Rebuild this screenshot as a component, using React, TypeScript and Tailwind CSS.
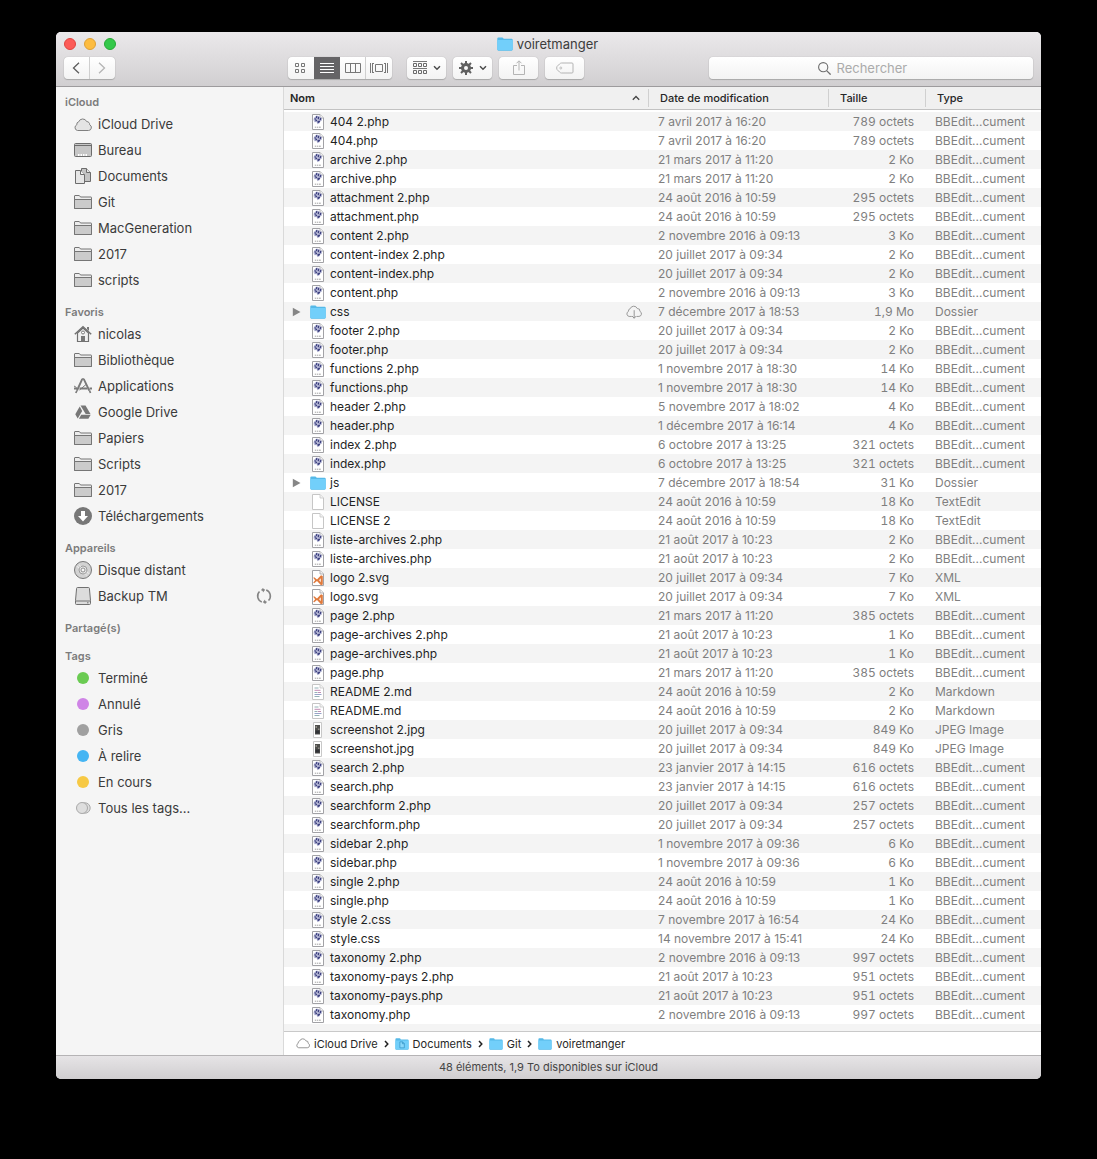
import { ReactElement, ReactNode } from "react";

type Kind = "php" | "folder" | "blank" | "svg" | "md" | "jpg";
type FileRow = [name: string, kind: Kind, date: string, size: string, type: string];

const BB = "BBEdit...cument";

const files: FileRow[] = [
  ["404 2.php", "php", "7 avril 2017 à 16:20", "789 octets", BB],
  ["404.php", "php", "7 avril 2017 à 16:20", "789 octets", BB],
  ["archive 2.php", "php", "21 mars 2017 à 11:20", "2 Ko", BB],
  ["archive.php", "php", "21 mars 2017 à 11:20", "2 Ko", BB],
  ["attachment 2.php", "php", "24 août 2016 à 10:59", "295 octets", BB],
  ["attachment.php", "php", "24 août 2016 à 10:59", "295 octets", BB],
  ["content 2.php", "php", "2 novembre 2016 à 09:13", "3 Ko", BB],
  ["content-index 2.php", "php", "20 juillet 2017 à 09:34", "2 Ko", BB],
  ["content-index.php", "php", "20 juillet 2017 à 09:34", "2 Ko", BB],
  ["content.php", "php", "2 novembre 2016 à 09:13", "3 Ko", BB],
  ["css", "folder", "7 décembre 2017 à 18:53", "1,9 Mo", "Dossier"],
  ["footer 2.php", "php", "20 juillet 2017 à 09:34", "2 Ko", BB],
  ["footer.php", "php", "20 juillet 2017 à 09:34", "2 Ko", BB],
  ["functions 2.php", "php", "1 novembre 2017 à 18:30", "14 Ko", BB],
  ["functions.php", "php", "1 novembre 2017 à 18:30", "14 Ko", BB],
  ["header 2.php", "php", "5 novembre 2017 à 18:02", "4 Ko", BB],
  ["header.php", "php", "1 décembre 2017 à 16:14", "4 Ko", BB],
  ["index 2.php", "php", "6 octobre 2017 à 13:25", "321 octets", BB],
  ["index.php", "php", "6 octobre 2017 à 13:25", "321 octets", BB],
  ["js", "folder", "7 décembre 2017 à 18:54", "31 Ko", "Dossier"],
  ["LICENSE", "blank", "24 août 2016 à 10:59", "18 Ko", "TextEdit"],
  ["LICENSE 2", "blank", "24 août 2016 à 10:59", "18 Ko", "TextEdit"],
  ["liste-archives 2.php", "php", "21 août 2017 à 10:23", "2 Ko", BB],
  ["liste-archives.php", "php", "21 août 2017 à 10:23", "2 Ko", BB],
  ["logo 2.svg", "svg", "20 juillet 2017 à 09:34", "7 Ko", "XML"],
  ["logo.svg", "svg", "20 juillet 2017 à 09:34", "7 Ko", "XML"],
  ["page 2.php", "php", "21 mars 2017 à 11:20", "385 octets", BB],
  ["page-archives 2.php", "php", "21 août 2017 à 10:23", "1 Ko", BB],
  ["page-archives.php", "php", "21 août 2017 à 10:23", "1 Ko", BB],
  ["page.php", "php", "21 mars 2017 à 11:20", "385 octets", BB],
  ["README 2.md", "md", "24 août 2016 à 10:59", "2 Ko", "Markdown"],
  ["README.md", "md", "24 août 2016 à 10:59", "2 Ko", "Markdown"],
  ["screenshot 2.jpg", "jpg", "20 juillet 2017 à 09:34", "849 Ko", "JPEG Image"],
  ["screenshot.jpg", "jpg", "20 juillet 2017 à 09:34", "849 Ko", "JPEG Image"],
  ["search 2.php", "php", "23 janvier 2017 à 14:15", "616 octets", BB],
  ["search.php", "php", "23 janvier 2017 à 14:15", "616 octets", BB],
  ["searchform 2.php", "php", "20 juillet 2017 à 09:34", "257 octets", BB],
  ["searchform.php", "php", "20 juillet 2017 à 09:34", "257 octets", BB],
  ["sidebar 2.php", "php", "1 novembre 2017 à 09:36", "6 Ko", BB],
  ["sidebar.php", "php", "1 novembre 2017 à 09:36", "6 Ko", BB],
  ["single 2.php", "php", "24 août 2016 à 10:59", "1 Ko", BB],
  ["single.php", "php", "24 août 2016 à 10:59", "1 Ko", BB],
  ["style 2.css", "php", "7 novembre 2017 à 16:54", "24 Ko", BB],
  ["style.css", "php", "14 novembre 2017 à 15:41", "24 Ko", BB],
  ["taxonomy 2.php", "php", "2 novembre 2016 à 09:13", "997 octets", BB],
  ["taxonomy-pays 2.php", "php", "21 août 2017 à 10:23", "951 octets", BB],
  ["taxonomy-pays.php", "php", "21 août 2017 à 10:23", "951 octets", BB],
  ["taxonomy.php", "php", "2 novembre 2016 à 09:13", "997 octets", BB],
];

function BlueFolder({ small = false, doc = false }: { small?: boolean; doc?: boolean }) {
  return (
    <svg viewBox="0 0 16 14" className={small ? "h-3 w-3.5 shrink-0" : "h-3.5 w-4 shrink-0"}>
      <path d="M.3 1.6Q.3.4 1.4.4h3.8q.7 0 1 .6l.4.8h8q1.1 0 1.1 1v9.800q0 1.100-1.100 1.100H1.400Q.3 13.700.3 12.600z" fill="#55b9e8" />
      <path d="M.3 3h15.400v9.200q0 1-1.100 1H1.400q-1.100 0-1.100-1z" fill="#72cffa" />
      {doc && <path d="M5.500 4.500h3.200l2 2v5H5.500zM8.500 4.500v2.200h2.200" fill="#8ad8fb" stroke="#3897c9" strokeWidth=".9" />}
    </svg>
  );
}

function FileIcon({ kind }: { kind: Kind }) {
  if (kind === "folder") return <BlueFolder />;
  if (kind === "jpg")
    return (
      <svg viewBox="0 0 16 16" className="size-4 shrink-0">
        <path d="M3.500.5h8v15h-8z" fill="#fff" stroke="#c8c8c8" />
        <path d="M5 3h5v9.500H5z" fill="#4f4f4c" />
        <path d="M5.500 4H7v2H5.500zM8 6.500h1.500V8H8z" fill="#8d8a84" />
        <path d="M5.500 8.500h4v3h-4z" fill="#303236" />
      </svg>
    );
  const edge = kind === "php" || kind === "svg" ? "#a2a2a6" : "#c6c6c6";
  return (
    <svg viewBox="0 0 16 16" className="size-4 shrink-0">
      <path d="M2.500.5H10l3.500 3.500v11.500h-11z" fill="#fff" stroke={edge} />
      <path d="M10 .5V4h3.500" fill="#f2f2f2" stroke={edge} strokeWidth=".8" />
      {kind === "php" && (
        <>
          <path d="M4 3.800l2.500-2.200 2.500.4 2.700 1.800.3 2.800-1.700.6-.8 2-2 1-1-2.200-2 .2-1-2.200z" fill="#b9bbd8" />
          <path d="M6.800 2.200l-.5 2M8.600 2.800l-.3 2.400M4.600 4.600l1.200 1M10.800 4l-.6 2.200M5.400 7l1.600-.8M8 7l.4 2M9.600 6.800l-.4 1.400" fill="none" stroke="#3d417f" strokeWidth="1.300" />
          <path d="M4.800 13.200h1.400M6.900 13.200h1.200M8.800 13.200h2" stroke="#a0a0a0" />
        </>
      )}
      {kind === "svg" && (
        <>
          <path d="M3.200 7.800l1-.6 2.800 2.300 4-4.200 1.800.8v8.300l-1.800.8-4-4.200-2.800 2.300-1-.6 1.900-2.400z" fill="#e07a3c" />
          <path d="M8.800 10.200l2.200-2v4z" fill="#f8dccb" />
        </>
      )}
      {kind === "md" && (
        <>
          <path d="M4.500 4h4M4.500 8.500h3M4.500 12.500h5" stroke="#93b0b5" />
          <path d="M4.500 6.300h6M8 8.500h3" stroke="#c08db3" />
          <path d="M4.500 10.500h7" stroke="#98a3c8" />
        </>
      )}
    </svg>
  );
}

const cloudPath =
  "M3.500 15.500h11a3 3 0 0 0 1.200-5.700 2.900 2.900 0 0 0-3-3.200A4.300 4.300 0 0 0 4.700 6.800 2.600 2.600 0 0 0 2.800 9.800 3 3 0 0 0 3.500 15.500z";

const glyphs: Record<string, ReactNode> = {
  cloud: <path d={cloudPath} fill="#e4e4e4" stroke="#808080" />,
  desktop: (
    <>
      <rect x=".5" y="2.500" width="17" height="13" rx="1" fill="#c6c6c6" stroke="#6c6c6c" />
      <path d="M1 4.500h16" stroke="#6c6c6c" />
      <path d="M4 14h1.500M6.500 14H8M9 14h1.500M11.500 14H13" stroke="#fff" strokeWidth="2" />
    </>
  ),
  documents: (
    <>
      <path d="M7.500 1.500h5l4 4v9h-9z" fill="#c4c4c4" stroke="#6c6c6c" />
      <path d="M12.500 1.500v4h4" fill="#e4e4e4" stroke="#6c6c6c" />
      <path d="M1.500 3.500h5l4 4v9h-9z" fill="#e6e6e6" stroke="#6c6c6c" />
      <path d="M6.500 3.500v4h4" fill="#f5f5f5" stroke="#6c6c6c" />
    </>
  ),
  folder: (
    <>
      <path d="M.5 15.500V3q0-.5.5-.5h4q.5 0 .8.500l.7 1H17q.5 0 .5.500v11z" fill="#ececec" stroke="#757575" />
      <path d="M.5 6.500h17v9H.5z" fill="#cbcbcb" stroke="#757575" />
    </>
  ),
  home: (
    <>
      <path d="M13 2h2v4l-2-2z" fill="#777" />
      <path d="M3.500 8v8.500h11V8L9 3z" fill="#f0f0f0" stroke="#707070" strokeWidth="1.200" />
      <path d="M.8 9.200L9 1.800l8.200 7.400" fill="none" stroke="#707070" strokeWidth="1.500" />
      <path d="M7 11h4v5.500H7z" fill="#777" />
      <circle cx="9" cy="7.500" r="1.500" fill="#fff" stroke="#777" />
    </>
  ),
  apps: (
    <g fill="none" stroke="#7a7a7a">
      <path d="M8.200 2.200L3 13.500M9.800 2.200l5.500 11.500" strokeWidth="1.900" />
      <path d="M7.800 2h2.400M3 13.500L1.800 16M15.500 13.500l1 2.500" strokeWidth="1.700" />
      <path d="M0 11.500h3M5.500 11.500h8M15.500 11.500H18" strokeWidth="2" />
      <path d="M0 9l2.500 1.500M5.500 13L12 7.500" strokeWidth="1" />
    </g>
  ),
  gdrive: (
    <g fill="#777">
      <path d="M6.500 2.500h5l5 8.500h-4.800z" />
      <path d="M5.700 3.600l2.500 4.300-4.500 7.600L1.300 11.300z" />
      <path d="M7.200 11.800h9.500l-2.300 4H4.900z" />
    </g>
  ),
  download: (
    <>
      <circle cx="9" cy="9" r="9" fill="#777" />
      <path d="M7 4h4v5h3l-5 5.500L4 9h3z" fill="#fff" />
    </>
  ),
  disc: (
    <>
      <circle cx="9" cy="9" r="8.500" fill="#d2d2d2" stroke="#777" />
      <circle cx="9" cy="9" r="4" fill="#e8e8e8" stroke="#8a8a8a" strokeWidth=".8" />
      <circle cx="9" cy="9" r="2" fill="#f6f6f6" stroke="#777" strokeWidth=".8" />
      <path d="M3 5.500L5.500 7M5 3.500L6.800 6M12.500 11l2.500 1.500M11 12.500l2 2.200" stroke="#f2f2f2" strokeWidth=".8" />
    </>
  ),
  drive: (
    <>
      <path d="M3.500.5h11q.8 0 .9.800l1.100 12.200v3q0 1-1 1h-13q-1 0-1-1v-3L2.600 1.300q.1-.8.900-.8z" fill="#dcdcdc" stroke="#707070" />
      <path d="M1.500 14h15" stroke="#707070" />
      <path d="M13 15.800h1.500" stroke="#707070" />
    </>
  ),
  green: <circle cx="9" cy="9" r="6" fill="#6acb52" />,
  purple: <circle cx="9" cy="9" r="6" fill="#cf84e6" />,
  gray: <circle cx="9" cy="9" r="6" fill="#a0a0a0" />,
  blue: <circle cx="9" cy="9" r="6" fill="#45b5f3" />,
  yellow: <circle cx="9" cy="9" r="6" fill="#f7c944" />,
  all: (
    <g fill="#dedede" stroke="#a2a2a2" strokeWidth=".9">
      <circle cx="11" cy="9" r="5.200" />
      <circle cx="8" cy="9" r="5.500" />
    </g>
  ),
};

const sections: { title: string; items: [icon: string, label: string][] }[] = [
  {
    title: "iCloud",
    items: [
      ["cloud", "iCloud Drive"],
      ["desktop", "Bureau"],
      ["documents", "Documents"],
      ["folder", "Git"],
      ["folder", "MacGeneration"],
      ["folder", "2017"],
      ["folder", "scripts"],
    ],
  },
  {
    title: "Favoris",
    items: [
      ["home", "nicolas"],
      ["folder", "Bibliothèque"],
      ["apps", "Applications"],
      ["gdrive", "Google Drive"],
      ["folder", "Papiers"],
      ["folder", "Scripts"],
      ["folder", "2017"],
      ["download", "Téléchargements"],
    ],
  },
  {
    title: "Appareils",
    items: [
      ["disc", "Disque distant"],
      ["drive", "Backup TM"],
    ],
  },
  { title: "Partagé(s)", items: [] },
  {
    title: "Tags",
    items: [
      ["green", "Terminé"],
      ["purple", "Annulé"],
      ["gray", "Gris"],
      ["blue", "À relire"],
      ["yellow", "En cours"],
      ["all", "Tous les tags..."],
    ],
  },
];

function Sidebar() {
  return (
    <nav className="w-[228px] shrink-0 border-r border-[#d9d9d9] bg-[#f5f5f5] pt-1.5">
      {sections.map((section) => (
        <section key={section.title} className="mb-2.5">
          <h2 className="h-[18px] pl-[9px] text-[11px] leading-[18px] font-semibold text-[#7c7c7c]">
            {section.title}
          </h2>
          <ul>
            {section.items.map(([icon, label], i) => (
              <li key={i} className="flex h-[26px] items-center pr-[11px] pl-[18px]">
                <a href="#" className="flex flex-1 items-center gap-1.5 text-[13px] leading-4 text-[#3b3b3b]">
                  <svg viewBox="0 0 18 18" className="size-[18px]">
                    {glyphs[icon]}
                  </svg>
                  {label}
                </a>
                {icon === "drive" && (
                  <svg viewBox="0 0 16 16" className="size-4">
                    <path
                      d="M5.800 14A6.400 6.400 0 0 1 3.500 3.500M10.200 2A6.400 6.400 0 0 1 12.500 12.500M5.500 2.200A6.400 6.400 0 0 1 8 1.600M10.500 13.800A6.400 6.400 0 0 1 8 14.400"
                      fill="none"
                      stroke="#858585"
                      strokeWidth="1.600"
                    />
                    <path d="M6.200 0l3 1.800L7 4.400zM9.800 16l-3-1.800L9 11.600z" fill="#858585" />
                  </svg>
                )}
              </li>
            ))}
          </ul>
        </section>
      ))}
    </nav>
  );
}

const face = "flex h-[22px] items-center justify-center bg-linear-to-b from-white to-[#f3f3f3]";
const button = `${face} w-[39px] rounded shadow-[0_0_1px_#999,0_1px_1px_#aaa]`;

function Caret() {
  return (
    <svg viewBox="0 0 8 6" className="h-1.5 w-2">
      <path d="M1 1.200l3 3 3-3" fill="none" stroke="#4d4d4d" strokeWidth="1.500" />
    </svg>
  );
}

function Toolbar() {
  return (
    <header className="h-[55px] border-b border-[#9d9b9d] bg-linear-to-b from-[#ebe9eb] to-[#d1cfd1]">
      <div className="mb-0.5 grid h-[23px] grid-cols-[1fr_auto_1fr] items-center px-2">
        <div className="flex gap-2">
          <button aria-label="Fermer" className="size-3 rounded-full border border-[#e0443e] bg-[#fc5b57]" />
          <button aria-label="Réduire" className="size-3 rounded-full border border-[#dea034] bg-[#fdbc40]" />
          <button aria-label="Agrandir" className="size-3 rounded-full border border-[#27a835] bg-[#34c84a]" />
        </div>
        <h1 className="flex items-center gap-1 pr-0.5 text-[13px] leading-4 text-[#3c3c3c]">
          <BlueFolder />
          voiretmanger
        </h1>
      </div>
      <div className="flex px-2">
        <div className="flex gap-px rounded bg-[#cfcfcf] shadow-[0_0_1px_#999,0_1px_1px_#aaa]">
          <button aria-label="Précédent" className={`${face} w-[25px] rounded-l pr-0.5`}>
            <svg viewBox="0 0 8 12" className="h-3 w-2">
              <path d="M7 .8L1.500 6 7 11.200" fill="none" stroke="#5d5d5d" strokeWidth="1.300" />
            </svg>
          </button>
          <button aria-label="Suivant" className={`${face} w-[25px] rounded-r pr-0.5`}>
            <svg viewBox="0 0 8 12" className="h-3 w-2">
              <path d="M1 .8L6.500 6 1 11.200" fill="none" stroke="#b5b5b5" strokeWidth="1.300" />
            </svg>
          </button>
        </div>
        <div className="ml-[173px] flex rounded shadow-[0_0_1px_#999,0_1px_1px_#aaa]">
          <button aria-label="Icônes" className={`${face} w-[26px] rounded-l pr-0.5`}>
            <svg viewBox="0 0 12 12" className="size-3">
              <path d="M1.500 1.500h3v3h-3zM7.500 1.500h3v3h-3zM1.500 7.500h3v3h-3zM7.500 7.500h3v3h-3z" fill="none" stroke="#777" />
            </svg>
          </button>
          <button aria-label="Liste" className="flex h-[22px] w-[26px] items-center justify-center bg-[#656466]">
            <svg viewBox="0 0 14 12" className="h-3 w-3.5">
              <path d="M0 1.500h14M0 4.500h14M0 7.500h14M0 10.500h14" stroke="#fff" />
            </svg>
          </button>
          <button aria-label="Colonnes" className={`${face} w-[26px] border-r border-[#cfcfcf]`}>
            <svg viewBox="0 0 16 12" className="h-3 w-4">
              <path d="M.5 1.500h15v9H.5zM5.500 1.500v9M10.500 1.500v9" fill="none" stroke="#777" />
            </svg>
          </button>
          <button aria-label="Cover Flow" className={`${face} w-[26px] rounded-r`}>
            <svg viewBox="0 0 20 12" className="h-3 w-5 shrink-0">
              <path d="M1.500 1v10M3.500 1v10M4 1.500h1M4 10.500h1M6.500 2.500h7v7h-7zM16.500 1v10M18.500 1v10M15 1.500h1M15 10.500h1" fill="none" stroke="#777" />
            </svg>
          </button>
        </div>
        <div className="ml-[15px] flex gap-[7px]">
          <button aria-label="Organiser" className={`${button} gap-1.5`}>
            <svg viewBox="0 0 14 14" className="size-3.5">
              <path d="M0 .5h14M0 7.500h14" stroke="#777" />
              <path d="M.5 2.500h3v3h-3zM5.500 2.500h3v3h-3zM10.500 2.500h3v3h-3zM.5 9.500h3v3h-3zM5.500 9.500h3v3h-3zM10.500 9.500h3v3h-3z" fill="none" stroke="#6a6a6a" />
            </svg>
            <Caret />
          </button>
          <button aria-label="Actions" className={`${button} gap-1.5`}>
            <svg viewBox="0 0 14 14" className="size-3.5">
              <circle cx="7" cy="7" r="3.500" fill="none" stroke="#606060" strokeWidth="3" />
              <path d="M7 0v3M7 11v3M0 7h3M11 7h3M2 2l2.200 2.200M9.800 9.800L12 12M12 2L9.800 4.200M4.200 9.800L2 12" stroke="#606060" strokeWidth="2" />
            </svg>
            <Caret />
          </button>
          <button aria-label="Partager" className={button}>
            <svg viewBox="0 0 12 16" className="h-4 w-3">
              <path d="M4 5.500H.5v9h11v-9H8M6 10.500V1M3.500 3.300L6 .8l2.500 2.500" fill="none" stroke="#b4b4b4" />
            </svg>
          </button>
          <button aria-label="Tags" className={button}>
            <svg viewBox="0 0 18 12" className="h-3 w-[18px]">
              <path d="M5.500 1H16q1 0 1 1v8q0 1-1 1H5.500Q4.500 11 3.500 10L1 7.500Q.3 6 1 4.500L3.500 2Q4.500 1 5.500 1z" fill="none" stroke="#b4b4b4" />
              <circle cx="4.800" cy="6" r="1" fill="none" stroke="#b4b4b4" strokeWidth=".8" />
            </svg>
          </button>
        </div>
        <label className={`${face} ml-auto w-[324px] gap-1.5 rounded shadow-[0_0_1px_#999,0_1px_1px_#aaa]`}>
          <svg viewBox="0 0 13 13" className="size-[13px]">
            <circle cx="5.200" cy="5.200" r="4.600" fill="none" stroke="#6e6e6e" strokeWidth="1.100" />
            <path d="M8.600 8.600l4 4" stroke="#6e6e6e" strokeWidth="1.300" />
          </svg>
          <input
            type="text"
            aria-label="Rechercher"
            placeholder="Rechercher"
            className="w-[88px] text-[13px] leading-4 outline-none placeholder:text-[#ababab]"
          />
        </label>
      </div>
    </header>
  );
}

function FileTable() {
  const th = "h-[23px] border-b border-[#c2c2c2] bg-[#f0f0f0] p-0 font-medium text-left";
  const split = "flex h-[18px] items-center border-l border-[#d0d0d0] pl-[11px]";
  return (
    <table className="w-full table-fixed border-separate border-spacing-0 text-xs text-[#7f7f7f]">
      <colgroup>
        <col />
        <col className="w-[180px]" />
        <col className="w-[97px]" />
        <col className="w-[116px]" />
      </colgroup>
      <thead className="text-[11px] leading-4 text-[#262626]">
        <tr>
          <th className={th}>
            <button className="flex w-full items-center justify-between pr-2 pl-1.5 font-semibold">
              Nom
              <svg viewBox="0 0 8 6" className="h-1.5 w-2">
                <path d="M.8 4.800L4 1.500l3.200 3.300" fill="none" stroke="#444" strokeWidth="1.300" />
              </svg>
            </button>
          </th>
          <th className={th}><div className={split}>Date de modification</div></th>
          <th className={th}><div className={split}>Taille</div></th>
          <th className={th}><div className={split}>Type</div></th>
        </tr>
      </thead>
      <tbody className="before:block before:h-0.5">
        {files.map(([name, kind, date, size, type]) => (
          <tr key={name} className="h-[19px] leading-[19px] whitespace-nowrap odd:bg-[#f4f4f4]">
            <td className="p-0">
              <div className="flex h-[19px] items-center pr-1.5 pl-2 text-[#1f1f1f]">
                <div className="flex w-[18px] shrink-0">
                  {kind === "folder" && (
                    <button aria-label={`Ouvrir ${name}`}>
                      <svg viewBox="0 0 9 10" className="h-2.5 w-[9px]">
                        <path d="M.8.8v8.400L8.500 5z" fill="#868686" />
                      </svg>
                    </button>
                  )}
                </div>
                <FileIcon kind={kind} />
                <span className="ml-1 flex-1">{name}</span>
                {name === "css" && (
                  <svg viewBox="0 0 18 18" className="size-4">
                    <path d="M6.500 14H3.500a3 3 0 0 1-.7-5.700A2.600 2.600 0 0 1 4.700 5.300 4.300 4.300 0 0 1 12.700 5.100a2.900 2.900 0 0 1 3 3.200A3 3 0 0 1 14.500 14H12" fill="none" stroke="#8e8e8e" />
                    <path d="M9.200 7v9M6.800 13.500l2.400 2.500 2.400-2.500" fill="none" stroke="#8a8a8a" />
                  </svg>
                )}
              </div>
            </td>
            <td className="p-0 pl-2.5">{date}</td>
            <td className="p-0 pr-[11px] text-right tabular-nums">{size}</td>
            <td className="p-0 pl-2.5">{type}</td>
          </tr>
        ))}
      </tbody>
    </table>
  );
}

function PathBar() {
  const steps = ["iCloud Drive", "Documents", "Git", "voiretmanger"];
  return (
    <div className="flex h-6 items-center gap-1.5 border-t border-[#c9c9c9] bg-white pl-3 text-[11px] leading-4 text-[#262626]">
      {steps.map((step, i) => (
        <div key={step} className="flex items-center gap-1.5">
          {i > 0 && (
            <svg viewBox="0 0 5 8" className="h-2 w-[5px]">
              <path d="M1 1l2.800 3L1 7" fill="none" stroke="#222" strokeWidth="1.500" />
            </svg>
          )}
          <a href="#" className="flex items-center gap-1">
            {i === 0 ? (
              <svg viewBox="0 3 18 14" className="h-[11px] w-3.5">
                <path d={cloudPath} fill="#fff" stroke="#909090" strokeWidth="1.200" />
              </svg>
            ) : (
              <BlueFolder small doc={step === "Documents"} />
            )}
            {step}
          </a>
        </div>
      ))}
    </div>
  );
}

export default function App(): ReactElement {
  return (
    <div className="min-h-screen bg-black px-14 pt-8 pb-20 font-['Inter',sans-serif]">
      <main className="overflow-hidden rounded-[5px] bg-white">
        <Toolbar />
        <div className="flex">
          <Sidebar />
          <div className="min-w-0 flex-1">
            <FileTable />
            <div className="h-[7px] bg-[#f4f4f4]" />
            <PathBar />
          </div>
        </div>
        <footer className="h-6 border-t border-[#b5b3b5] bg-linear-to-b from-[#e6e4e6] to-[#d0ced0] text-center text-[11px] leading-[22px] text-[#454545]">
          48 éléments, 1,9 To disponibles sur iCloud
        </footer>
      </main>
    </div>
  );
}
